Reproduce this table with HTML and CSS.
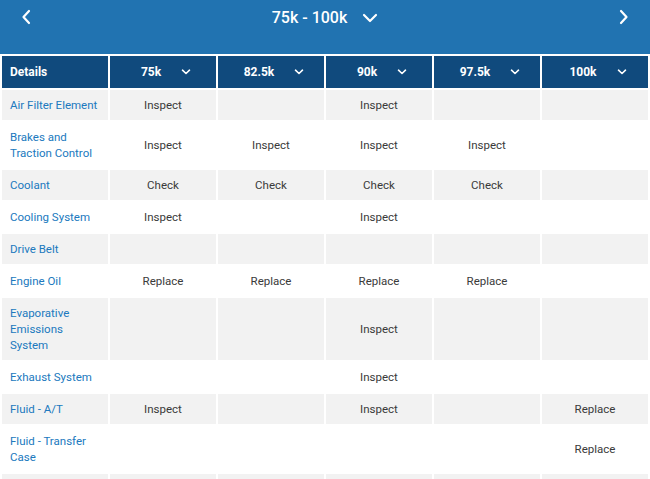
FILE: index.html
```html
<!DOCTYPE html>
<html>
<head>
<meta charset="utf-8">
<link rel="stylesheet" href="styles.css">
</head>
<body>
<div class="page">
  <div class="topbar">
    <button class="nav prev" aria-label="Previous">
      <svg width="10" height="16" viewBox="0 0 10 16"><path d="M8 2 L2.5 8 L8 14" fill="none" stroke="#fff" stroke-width="2.2" stroke-linecap="round" stroke-linejoin="round"/></svg>
    </button>
    <div class="title">
      <span>75k - 100k</span>
      <svg width="16" height="10" viewBox="0 0 16 10"><path d="M2 2 L8 8 L14 2" fill="none" stroke="#fff" stroke-width="2.2" stroke-linecap="round" stroke-linejoin="round"/></svg>
    </div>
    <button class="nav next" aria-label="Next">
      <svg width="10" height="16" viewBox="0 0 10 16"><path d="M2 2 L7.5 8 L2 14" fill="none" stroke="#fff" stroke-width="2.2" stroke-linecap="round" stroke-linejoin="round"/></svg>
    </button>
  </div>
  <table class="sched">
    <thead>
      <tr>
        <th class="detail-h">Details</th>
        <th><span class="mh">75k<svg class="chev" width="10" height="6" viewBox="0 0 10 6"><path d="M1.5 1.2 L5 4.5 L8.5 1.2" fill="none" stroke="#fff" stroke-width="1.6" stroke-linecap="round" stroke-linejoin="round"/></svg></span></th>
        <th><span class="mh">82.5k<svg class="chev" width="10" height="6" viewBox="0 0 10 6"><path d="M1.5 1.2 L5 4.5 L8.5 1.2" fill="none" stroke="#fff" stroke-width="1.6" stroke-linecap="round" stroke-linejoin="round"/></svg></span></th>
        <th><span class="mh">90k<svg class="chev" width="10" height="6" viewBox="0 0 10 6"><path d="M1.5 1.2 L5 4.5 L8.5 1.2" fill="none" stroke="#fff" stroke-width="1.6" stroke-linecap="round" stroke-linejoin="round"/></svg></span></th>
        <th><span class="mh">97.5k<svg class="chev" width="10" height="6" viewBox="0 0 10 6"><path d="M1.5 1.2 L5 4.5 L8.5 1.2" fill="none" stroke="#fff" stroke-width="1.6" stroke-linecap="round" stroke-linejoin="round"/></svg></span></th>
        <th><span class="mh">100k<svg class="chev" width="10" height="6" viewBox="0 0 10 6"><path d="M1.5 1.2 L5 4.5 L8.5 1.2" fill="none" stroke="#fff" stroke-width="1.6" stroke-linecap="round" stroke-linejoin="round"/></svg></span></th>
      </tr>
    </thead>
    <tbody>
      <tr class="alt"><td class="item"><a href="#">Air Filter Element</a></td><td>Inspect</td><td></td><td>Inspect</td><td></td><td></td></tr>
      <tr><td class="item"><a href="#">Brakes and Traction Control</a></td><td>Inspect</td><td>Inspect</td><td>Inspect</td><td>Inspect</td><td></td></tr>
      <tr class="alt"><td class="item"><a href="#">Coolant</a></td><td>Check</td><td>Check</td><td>Check</td><td>Check</td><td></td></tr>
      <tr><td class="item"><a href="#">Cooling System</a></td><td>Inspect</td><td></td><td>Inspect</td><td></td><td></td></tr>
      <tr class="alt"><td class="item"><a href="#">Drive Belt</a></td><td></td><td></td><td></td><td></td><td></td></tr>
      <tr><td class="item"><a href="#">Engine Oil</a></td><td>Replace</td><td>Replace</td><td>Replace</td><td>Replace</td><td></td></tr>
      <tr class="alt"><td class="item"><a href="#">Evaporative Emissions System</a></td><td></td><td></td><td>Inspect</td><td></td><td></td></tr>
      <tr><td class="item"><a href="#">Exhaust System</a></td><td></td><td></td><td>Inspect</td><td></td><td></td></tr>
      <tr class="alt"><td class="item"><a href="#">Fluid - A/T</a></td><td>Inspect</td><td></td><td>Inspect</td><td></td><td>Replace</td></tr>
      <tr><td class="item"><a href="#">Fluid - Transfer Case</a></td><td></td><td></td><td></td><td></td><td>Replace</td></tr>
      <tr class="alt"><td class="item"></td><td></td><td></td><td></td><td></td><td></td></tr>
    </tbody>
  </table>
</div>
</body>
</html>
```

FILE: styles.css
```css
html, body {
  margin: 0;
  padding: 0;
  background: #fff;
  font-family: Roboto, "Liberation Sans", Arial, sans-serif;
}
.page {
  width: 650px;
  background: #2173b1;
}
.topbar {
  height: 56px;
  display: flex;
  align-items: flex-start;
  justify-content: space-between;
  padding: 0 16px;
  box-sizing: border-box;
}
.nav {
  background: none;
  border: 0;
  padding: 0;
  margin-top: 9px;
  width: 20px;
  height: 16px;
  display: flex;
  align-items: center;
  justify-content: center;
  cursor: pointer;
}
.title {
  display: flex;
  align-items: center;
  gap: 15px;
  color: #fff;
  font-size: 16px;
  font-weight: 500;
  height: 35px;
}
.sched {
  width: 650px;
  border-collapse: separate;
  border-spacing: 2px;
  table-layout: fixed;
  background: #fff;
  font-size: 11.5px;
  margin-top: -2px;
}
.sched th {
  background: #104a7d;
  color: #fff;
  font-weight: 700;
  font-size: 12px;
  height: 32px;
  padding: 0 8px;
  text-align: center;
}
.sched th.detail-h {
  text-align: left;
}
.mh {
  display: inline-flex;
  align-items: center;
  gap: 20px;
  padding-left: 6px;
}
.chev {
  display: block;
}
.sched td {
  padding: 7px 8px;
  line-height: 16px;
  height: 16px;
  text-align: center;
  color: #3a3a3a;
  vertical-align: middle;
}
.sched tr.alt td {
  background: #f2f2f2;
}
.sched td.item {
  text-align: left;
}
.item a {
  color: #2079be;
  text-decoration: none;
}
```
